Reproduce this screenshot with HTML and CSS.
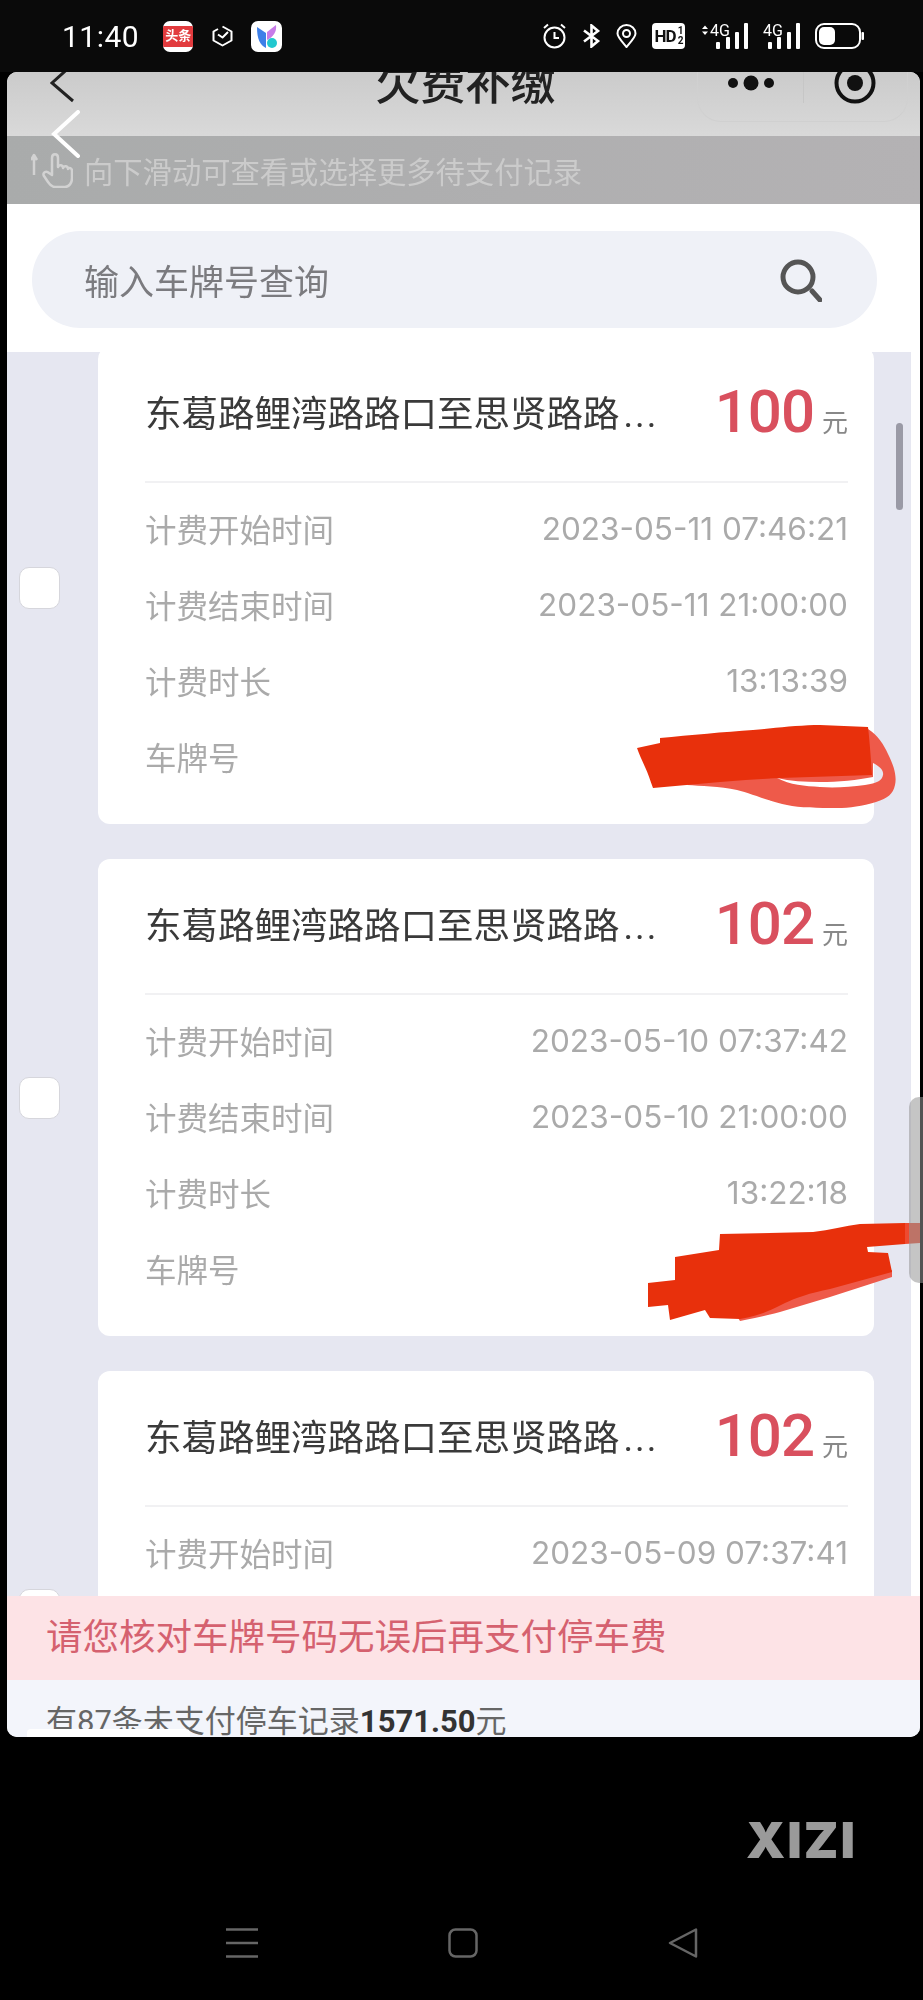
FILE: index.html
```html
<!DOCTYPE html>
<html lang="zh-CN">
  <head>
    <meta charset="UTF-8" />
    <meta name="viewport" content="width=device-width, initial-scale=1.0" />
    <title>欠费补缴</title>
    <link rel="stylesheet" href="styles.css">
  </head>
  <body>
    <!-- 状态栏 -->
    <div class="status-bar">
      <div class="status-left">
        <span class="clock">11:40</span>
        <span class="app-toutiao"><span>头条</span></span>
        <svg class="icon-box" width="21" height="22" viewBox="0 0 21 22" fill="none" stroke="#fff" stroke-width="2" stroke-linejoin="round"><path d="M10.5 1.5 19.5 6.5V15.5L10.5 20.5 1.5 15.5V6.5L6 4"/><path d="M6 9.5 10.5 12.5 16 7"/></svg>
        <svg class="icon-app" width="31" height="31" viewBox="0 0 31 31"><rect width="31" height="31" rx="7" fill="#fff"/><path d="M6 6 15 12V27C9 24 6 18 6 6Z" fill="#3d7fe8"/><path d="M25 4C26 11 22 16 16 19V11Z" fill="#c77be8"/><circle cx="21" cy="22" r="5" fill="#22c8cf"/></svg>
      </div>
      <div class="status-right">
        <svg width="25" height="26" viewBox="0 0 25 26" fill="none" stroke="#fff" stroke-width="2"><circle cx="12.5" cy="14.500" r="10"/><path d="M12.500 9V15H17M2 5 6 1.500M23 5 19 1.500"/></svg>
        <svg width="19" height="24" viewBox="0 0 19 24" fill="none" stroke="#fff" stroke-width="2.600"><path d="M2 6.500 16 17 9.500 22.500V1.500L16 7 2 17.500"/></svg>
        <svg width="21" height="24" viewBox="0 0 21 24" fill="none" stroke="#fff" stroke-width="2"><path d="M10.500 23C5 16.500 1.500 13 1.500 9.500A9 8.500 0 0 1 19.500 9.500C19.500 13 16 16.500 10.500 23Z"/><circle cx="10.500" cy="9.500" r="3.500"/></svg>
        <span class="hd-badge">HD<span class="hd-frac">1<br>2</span></span>
        <svg width="48" height="26" viewBox="0 0 48 26"><path d="M2 6 5 2.500 8 6ZM2 8.500 5 12 8 8.500Z" fill="#fff"/><text class="sig-text" x="10" y="13">4G</text><g fill="#fff"><rect x="16" y="19" width="4" height="7" rx="1"/><rect x="26" y="14" width="4" height="12" rx="1"/><rect x="35" y="9" width="4" height="17" rx="1"/><rect x="44" y="0" width="4" height="26" rx="1"/></g></svg>
        <svg width="37" height="26" viewBox="0 0 37 26"><text class="sig-text" x="0" y="13">4G</text><g fill="#fff"><rect x="5" y="19" width="4" height="7" rx="1"/><rect x="14" y="14" width="4" height="12" rx="1"/><rect x="24" y="9" width="4" height="17" rx="1"/><rect x="33" y="0" width="4" height="26" rx="1"/></g></svg>
        <svg width="49" height="26" viewBox="0 0 49 26"><rect x="1" y="1" width="44" height="24" rx="8" fill="none" stroke="#fff" stroke-width="2"/><rect x="4" y="4" width="16" height="18" rx="5" fill="#fff"/><rect x="46.500" y="9" width="2.500" height="8" rx="1" fill="#fff"/></svg>
      </div>
    </div>

    <div class="screen">
      <!-- 标题栏 -->
      <div class="nav-bar">
        <div class="nav-left">
          <svg width="24" height="40" viewBox="0 0 24 40" fill="none" stroke="#222" stroke-width="3"><path d="M23 -8 2 11 23 29"/></svg>
        </div>
        <div class="nav-title">欠费补缴</div>
        <div class="nav-right">
          <div class="capsule">
            <svg width="52" height="16" viewBox="0 0 52 16" fill="#111"><circle cx="7" cy="8" r="5"/><circle cx="25" cy="8" r="7.500"/><circle cx="43" cy="8" r="5"/></svg>
            <span class="capsule-line"></span>
            <svg width="42" height="42" viewBox="0 0 42 42"><circle cx="21" cy="21" r="18.500" fill="none" stroke="#111" stroke-width="4"/><circle cx="21" cy="21" r="8" fill="#111"/></svg>
          </div>
        </div>
      </div>

      <!-- 提示 -->
      <div class="scroll-hint">
        <svg width="42" height="36" viewBox="0 0 42 36" fill="none" stroke="#d2d2d2" stroke-width="2.500" stroke-linejoin="round"><path d="M3 23V4M0 8 3 3 6 8"/><path d="M21 23V6C21 1 27 1 27 6V15C28 12 32 13 32 16 33 13 37 14 37 17 38 15 41 16 41 19V26C41 31 38 35 34 35H24C21 35 19 33 17 30L13 24C11 21 15 18 18 21Z"/></svg>
        <span>向下滑动可查看或选择更多待支付记录</span>
      </div>

      <!-- 搜索 -->
      <div class="search-wrap">
        <div class="search-box">
          <span>输入车牌号查询</span>
          <svg width="42" height="44" viewBox="0 0 42 44" fill="none" stroke="#555" stroke-width="5"><circle cx="18" cy="19" r="15"/><path d="M32 33 40 42" stroke-linecap="round"/></svg>
        </div>
      </div>

      <!-- 停车记录 -->
      <div class="record-list">
        <div class="record first">
          <span class="checkbox"></span>
          <div class="card">
            <div class="card-head">
              <div class="road">东葛路鲤湾路路口至思贤路路<span class="dots">...</span></div>
              <div class="fee"><b>100</b><span>元</span></div>
            </div>
            <div class="info"><span>计费开始时间</span><span>2023-05-11 07:46:21</span></div>
            <div class="info"><span>计费结束时间</span><span>2023-05-11 21:00:00</span></div>
            <div class="info"><span>计费时长</span><span>13:13:39</span></div>
            <div class="info"><span>车牌号</span></div>
          </div>
        </div>
        <div class="record">
          <span class="checkbox"></span>
          <div class="card">
            <div class="card-head">
              <div class="road">东葛路鲤湾路路口至思贤路路<span class="dots">...</span></div>
              <div class="fee"><b>102</b><span>元</span></div>
            </div>
            <div class="info"><span>计费开始时间</span><span>2023-05-10 07:37:42</span></div>
            <div class="info"><span>计费结束时间</span><span>2023-05-10 21:00:00</span></div>
            <div class="info"><span>计费时长</span><span>13:22:18</span></div>
            <div class="info"><span>车牌号</span></div>
          </div>
        </div>
        <div class="record">
          <span class="checkbox"></span>
          <div class="card">
            <div class="card-head">
              <div class="road">东葛路鲤湾路路口至思贤路路<span class="dots">...</span></div>
              <div class="fee"><b>102</b><span>元</span></div>
            </div>
            <div class="info"><span>计费开始时间</span><span>2023-05-09 07:37:41</span></div>
          </div>
        </div>
      </div>

      <!-- 底部 -->
      <div class="warn-bar">请您核对车牌号码无误后再支付停车费</div>
      <div class="summary">有87条未支付停车记录<b>1571.50</b>元</div>

      <!-- 盖在页面上的东西 -->
      <span class="list-scrollbar"></span>
      <svg class="video-back" width="29" height="48" viewBox="0 0 29 48" fill="none" stroke="#fff" stroke-width="4" stroke-linecap="round"><path d="M27 2 3 24 27 46"/></svg>
      <svg class="scribble-a" width="262" height="88" viewBox="636 724 262 88">
        <path fill-rule="evenodd" fill="#ee5a4a" d="M868 729C878 735 884 745 888 754 894 766 897 776 895 785 893 794 888 798 876 802 862 806 850 808 837 808 818 808 800 808 787 805 765 800 750 793 737 790 720 786 700 786 687 785L700 770 800 750ZM777 778C790 781 805 782 820 782 838 782 858 780 873 777L873 763C879 766 884 770 883 775 882 781 877 783 865 785 850 787 835 788 820 787 805 786 790 785 777 778Z"/>
        <path fill="#e8300c" d="M660 738C690 735 725 732 753 730 775 728 800 725 820 725L868 727C870 745 871 760 872 775L780 778C760 779 740 780 720 782 698 784 675 786 653 788 650 780 648 773 645 767 642 760 639 754 637 748L660 743Z"/>
      </svg>
      <svg class="scribble-b" width="273" height="100" viewBox="647 1223 273 100">
        <path fill="#ee5a4a" d="M785 1296C810 1287 850 1278 892 1270V1277L830 1297 780 1312C765 1316 752 1319 740 1321L730 1305Z"/>
        <path fill="#e8300c" d="M720 1234 813 1232C830 1230 845 1226 860 1224L905 1223 905 1244 867 1247 868 1252 888 1253 892 1272 830 1289C810 1293 795 1298 785 1303 770 1311 755 1317 740 1319L710 1318 705 1310 670 1320 668 1305 648 1307V1283L675 1280V1257L719 1250Z"/>
        <path fill="#ee4a30" d="M905 1223H920V1243L905 1244Z"/>
      </svg>
      <span class="home-bar"></span>
    </div>

    <!-- 水印和导航键 -->
    <div class="bottom">
      <div class="watermark">XIZI</div>
      <div class="sys-nav">
        <svg width="32" height="30" viewBox="0 0 32 30" fill="none" stroke="#666" stroke-width="2.500"><path d="M0 1.500H32M0 15H32M0 28.500H32"/></svg>
        <svg width="30" height="30" viewBox="0 0 30 30" fill="none" stroke="#666" stroke-width="2.500"><rect x="1.500" y="1.500" width="27" height="27" rx="6"/></svg>
        <svg width="30" height="30" viewBox="0 0 30 30" fill="none" stroke="#666" stroke-width="2.500" stroke-linejoin="round"><path d="M28 1.500V28.500L2 15Z"/></svg>
      </div>
    </div>

    <span class="side-handle"></span>
  </body>
</html>
```

FILE: styles.css
```css
body {
  font-family: Roboto, "Noto Sans CJK SC", sans-serif;
  background-color: #000;
  margin: 0;
  color: #333;
  position: relative;
  height: 2000px;
  overflow: hidden;
}

/* 截图本身有点糊 */
.status-bar,
.screen,
.bottom {
  filter: blur(0.6px);
}

/* 状态栏 */
.status-bar {
  display: flex;
  justify-content: space-between;
  align-items: center;
  height: 72px;
  padding: 0 59px 0 62px;
  background-color: #0a0a0a;
  box-sizing: border-box;
}
.status-left {
  display: flex;
  align-items: center;
}
.clock {
  color: #fff;
  font-size: 30px;
  letter-spacing: 0.5px;
  margin-right: 24px;
}
.app-toutiao {
  display: flex;
  align-items: center;
  justify-content: center;
  width: 30px;
  height: 31px;
  border-radius: 7px;
  background-color: #fff;
  overflow: hidden;
  margin-right: 19px;
}
.app-toutiao span {
  width: 100%;
  height: 21px;
  line-height: 20px;
  text-align: center;
  font-size: 13px;
  font-weight: 700;
  color: #fff;
  background-color: #e23b3e;
}
.icon-box {
  margin-right: 18px;
}
.status-right {
  display: flex;
  align-items: center;
  gap: 15px;
}
.hd-badge {
  display: flex;
  align-items: center;
  justify-content: center;
  width: 33px;
  height: 26px;
  border-radius: 4px;
  background-color: #fff;
  color: #111;
  font-size: 17px;
  font-weight: 700;
  letter-spacing: -1px;
}
.hd-frac {
  font-size: 10px;
  line-height: 10px;
  margin-left: 2px;
  text-align: center;
}
.sig-text {
  fill: #fff;
  font-family: Roboto, sans-serif;
  font-size: 16px;
}

/* 页面 */
.screen {
  position: relative;
  display: flex;
  flex-direction: column;
  width: 913px;
  height: 1665px;
  margin-left: 7px;
  background-color: #fff;
  border-radius: 10px;
  overflow: hidden;
}

/* 标题栏 */
.nav-bar {
  display: grid;
  grid-template-columns: 1fr auto 1fr;
  height: 64px;
  flex-shrink: 0;
  background: linear-gradient(#cbcbcb, #d9d9d9);
  overflow: hidden;
}
.nav-left {
  padding-left: 43px;
}
.nav-title {
  font-size: 45px;
  font-weight: 500;
  line-height: 60px;
  margin: -17px 0 0 4px;
  color: #222;
}
.nav-right {
  display: flex;
  justify-content: flex-end;
  padding-right: 12px;
}
.capsule {
  display: flex;
  align-items: flex-start;
  width: 211px;
  height: 50px;
  box-sizing: border-box;
  padding-left: 28px;
  border: 1px solid #d0d0d0;
  border-top: none;
  border-radius: 0 0 24px 24px;
}
.capsule > svg:first-child {
  margin-top: 3px;
}
.capsule-line {
  width: 1px;
  height: 31px;
  margin: 0 30px 0 25px;
  background-color: #c6c6c6;
}
.capsule > svg:last-child {
  margin-top: -10px;
}

/* 提示 */
.scroll-hint {
  display: flex;
  align-items: center;
  gap: 11px;
  height: 68px;
  flex-shrink: 0;
  padding-left: 24px;
  box-sizing: border-box;
  background: linear-gradient(90deg, #a9abab, #b4b2b4);
  color: #cbcbcb;
  font-size: 29.300px;
}

/* 搜索 */
.search-wrap {
  flex-shrink: 0;
  height: 148px;
  padding: 27px 43px 0 25px;
  box-sizing: border-box;
}
.search-box {
  display: flex;
  justify-content: space-between;
  align-items: center;
  height: 97px;
  padding: 0 55px 0 52px;
  border-radius: 48px;
  background-color: #eff1f7;
  color: #7b7b7f;
  font-size: 35px;
}

/* 停车记录 */
.record-list {
  flex: 1;
  min-height: 0;
  display: flex;
  flex-direction: column;
  gap: 35px;
  margin-right: 9px;
  padding: 0 37px 0 12px;
  background-color: #e6e7f1;
  overflow: hidden;
}
.record {
  display: flex;
  align-items: center;
  gap: 38px;
  flex-shrink: 0;
}
.record.first {
  margin-top: -5px;
}
.record.first .checkbox {
  margin-top: 4px;
}
.checkbox {
  width: 41px;
  height: 42px;
  flex-shrink: 0;
  box-sizing: border-box;
  border: 1px solid #d6d6dc;
  border-radius: 10px;
  background-color: #fff;
}
.card {
  flex: 1;
  height: 477px;
  padding: 0 26px 0 47px;
  box-sizing: border-box;
  border-radius: 12px;
  background-color: #fff;
}
.card-head {
  display: flex;
  justify-content: space-between;
  align-items: center;
  height: 136px;
  padding-bottom: 5px;
  box-sizing: border-box;
  border-bottom: 2px solid #f1f1f3;
  margin-bottom: 7px;
}
.road {
  font-size: 36.500px;
  color: #3a3a3a;
  white-space: nowrap;
}
.dots {
  margin-left: 4px;
  letter-spacing: 2px;
}
.fee {
  display: flex;
  align-items: baseline;
  gap: 8px;
}
.fee b {
  font-size: 60px;
  font-weight: 500;
  letter-spacing: -1px;
  color: #d9505e;
}
.fee span {
  font-size: 26px;
  color: #888;
}
.info {
  display: flex;
  justify-content: space-between;
  align-items: center;
  height: 76px;
  color: #aaa;
  font-family: Inter, "Noto Sans CJK SC", sans-serif;
  font-size: 31.500px;
}

/* 底部 */
.warn-bar {
  flex-shrink: 0;
  height: 84px;
  line-height: 84px;
  padding-left: 39px;
  background-color: #fde3e6;
  color: #d5616f;
  font-size: 36.500px;
}
.summary {
  flex-shrink: 0;
  height: 57px;
  padding: 22px 0 0 39px;
  box-sizing: border-box;
  line-height: 40px;
  background-color: #f3f5fb;
  color: #666;
  font-size: 31px;
  white-space: nowrap;
  overflow: hidden;
}
.summary b {
  color: #333;
  font-weight: 700;
}

/* 盖在页面上的东西 */
.list-scrollbar {
  position: absolute;
  left: 889px;
  top: 351px;
  width: 7px;
  height: 87px;
  border-radius: 4px;
  background-color: #9a9aa6;
}
.video-back {
  position: absolute;
  left: 44px;
  top: 38px;
}
.scribble-a {
  position: absolute;
  left: 629px;
  top: 652px;
}
.scribble-b {
  position: absolute;
  left: 640px;
  top: 1151px;
}
.home-bar {
  position: absolute;
  left: 20px;
  bottom: 0;
  width: 163px;
  height: 8px;
  border-radius: 4px 4px 0 0;
  background-color: #fff;
}

/* 水印和导航键 */
.watermark {
  margin-top: 78px;
  padding-right: 66px;
  text-align: right;
  color: #9a9a9a;
  font-family: Inter, sans-serif;
  font-size: 50px;
  font-weight: 900;
  letter-spacing: 2px;
  line-height: 50px;
}
.sys-nav {
  display: flex;
  justify-content: center;
  gap: 190px;
  margin-top: 63px;
}
.side-handle {
  position: absolute;
  right: 0;
  top: 1097px;
  width: 14px;
  height: 186px;
  border-radius: 10px 0 0 10px;
  background-color: rgba(150, 150, 150, 0.55);
}
```
